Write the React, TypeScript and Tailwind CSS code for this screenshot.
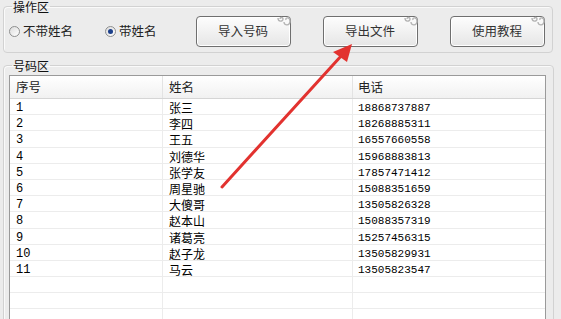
import React from "react";

const rows = [
  ["1", "张三", "18868737887"],
  ["2", "李四", "18268885311"],
  ["3", "王五", "16557660558"],
  ["4", "刘德华", "15968883813"],
  ["5", "张学友", "17857471412"],
  ["6", "周星驰", "15088351659"],
  ["7", "大傻哥", "13505826328"],
  ["8", "赵本山", "15088357319"],
  ["9", "诸葛亮", "15257456315"],
  ["10", "赵子龙", "13505829931"],
  ["11", "马云", "13505823547"],
  ["", "", ""],
  ["", "", ""],
  ["", "", ""],
];

function Swirl() {
  return (
    <svg width="16" height="12" viewBox="0 0 16 12" className="absolute -top-[1px] -right-[2px]" fill="none" stroke="#b4b4b4" strokeWidth="1.4">
      <path d="M2 2 C2 6 7 6 7 3 C7 1 4 1 4 3" />
      <path d="M8 6 C8 10 14 10 14 5 C14 1 9 1 10 4" />
    </svg>
  );
}

function Btn({ label }: { label: string }) {
  return (
    <button className="relative shrink-0 w-[95px] h-[31px] rounded-[4px] border border-[#6f6f6f] bg-gradient-to-b from-[#fdfdfd] to-[#e6e6e6] text-[12.5px] text-[#333] shadow-[inset_0_0_0_1px_#ffffff]">
      {label}
      <Swirl />
    </button>
  );
}

function Radio({ checked, label }: { checked?: boolean; label: string }) {
  return (
    <label className="flex shrink-0 items-center gap-[3px] whitespace-nowrap text-[12.5px] text-[#222]">
      <span className="w-[11px] h-[11px] shrink-0 rounded-full border border-[#8e8f8f] bg-gradient-to-br from-[#dcdcdc] to-white flex items-center justify-center">
        {checked && <span className="w-[5px] h-[5px] rounded-full bg-[#1b3f8a]" />}
      </span>
      {label}
    </label>
  );
}

export default function App() {
  return (
    <div
      className="relative w-[561px] h-[319px] overflow-hidden bg-[#ececec]"
      style={{ fontFamily: '"Noto Sans CJK SC", "Liberation Sans", sans-serif' }}
    >
      <fieldset className="ml-[3px] w-[550px] h-[53px] border border-[#d2d2d2] rounded-[4px] px-[5px] shadow-[inset_1px_1px_0_#fafafa]">
        <legend className="ml-[3px] px-[1px] text-[12px] leading-[13px] text-[#111]">操作区</legend>
        <div className="flex items-center h-[37px]">
          <Radio label="不带姓名" />
          <div className="ml-[32px] shrink-0">
            <Radio checked label="带姓名" />
          </div>
          <div className="ml-[39px] flex shrink-0 gap-[32px]">
            <Btn label="导入号码" />
            <Btn label="导出文件" />
            <Btn label="使用教程" />
          </div>
        </div>
      </fieldset>

      <fieldset className="ml-[3px] mt-[6px] w-[551px] h-[300px] border border-[#d2d2d2] rounded-[4px] pl-[5px] pr-[7px] pt-[3px] shadow-[inset_1px_1px_0_#fafafa]">
        <legend className="ml-[3px] px-[1px] text-[12px] leading-[13px] text-[#111]">号码区</legend>
        <div className="border border-[#9a9a9a] bg-white h-[260px] overflow-hidden">
          <div className="flex h-[23px] bg-gradient-to-b from-white to-[#f1f1f1] border-b border-[#d5d5d5] text-[12.5px] text-[#222]">
            <div className="w-[153px] pl-[6px] flex items-center border-r border-[#e3e3e3]">序号</div>
            <div className="w-[190px] pl-[6px] flex items-center border-r border-[#e3e3e3]">姓名</div>
            <div className="flex-1 pl-[5px] flex items-center">电话</div>
          </div>
          {rows.map((r, i) => (
            <div
              key={i}
              className="flex h-[16.2px] border-b border-[#ececec] text-[12px] leading-[18px] text-black"
              style={{ fontFamily: '"Liberation Mono", "Noto Sans CJK SC", monospace' }}
            >
              <div className="w-[153px] pl-[6px] border-r border-[#ececec]">{r[0]}</div>
              <div className="w-[190px] pl-[6px] border-r border-[#ececec]" style={{ fontFamily: '"Noto Sans CJK SC", sans-serif' }}>
                {r[1]}
              </div>
              <div className="flex-1 pl-[5px] text-[11px]">{r[2]}</div>
            </div>
          ))}
        </div>
      </fieldset>

      <svg className="absolute left-0 top-0 pointer-events-none" width="561" height="319">
        <line x1="222" y1="187" x2="342" y2="55" stroke="#e2322f" strokeWidth="3" strokeLinecap="round" />
        <polygon points="352,44 347,62 333,52" fill="#e2322f" />
      </svg>
    </div>
  );
}
